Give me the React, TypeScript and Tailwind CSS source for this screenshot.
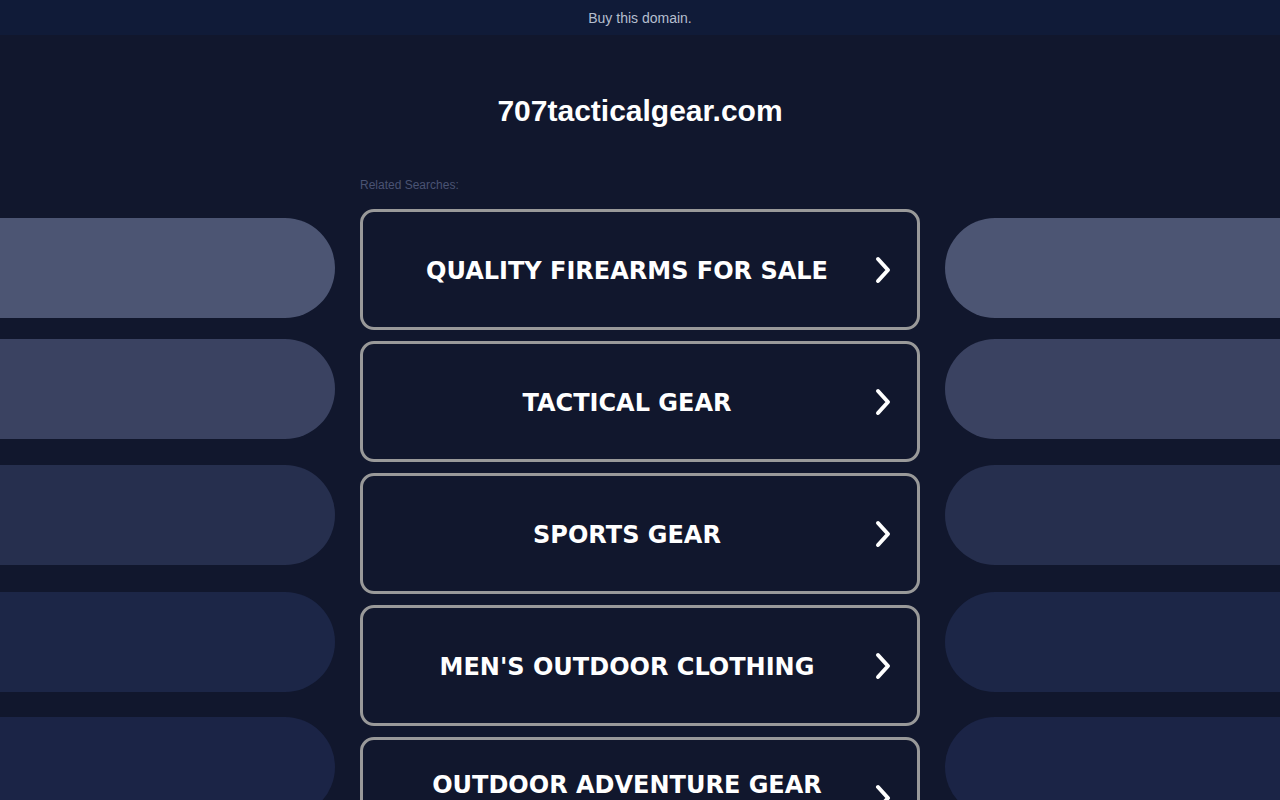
const LINKS = [
  "QUALITY FIREARMS FOR SALE",
  "TACTICAL GEAR",
  "SPORTS GEAR",
  "MEN'S OUTDOOR CLOTHING",
  "OUTDOOR ADVENTURE GEAR STORES",
]

const PILLS = [
  "bg-[#4c5573] mt-0",
  "bg-[#3a4261] mt-[21px]",
  "bg-[#262f4e] mt-[26px]",
  "bg-[#1c2647] mt-[27px]",
  "bg-[#1b2446] mt-[25px]",
]

function Chevron() {
  return (
    <svg width="20" height="28" viewBox="0 0 20 28" className="shrink-0">
      <polyline
        points="5,3 15,14 5,25"
        fill="none"
        stroke="#fff"
        strokeWidth="4"
        strokeLinecap="round"
        strokeLinejoin="round"
      />
    </svg>
  )
}

function Pills({ side }: { side: "left" | "right" }) {
  return (
    <div className="flex flex-col pt-[40px]">
      {PILLS.map((cls, i) => (
        <div
          key={i}
          className={`h-[100px] shrink-0 ${cls} ${side === "left" ? "rounded-r-[50px]" : "rounded-l-[50px]"}`}
        />
      ))}
    </div>
  )
}

export default function App() {
  return (
    <div className="h-[800px] overflow-hidden bg-[#11172d] font-['Liberation_Sans',Arial,sans-serif]">
      <div className="h-[35px] bg-[#101b38] flex items-center justify-center pt-[1px] text-[14px] text-[#b5bfcf]">
        Buy this domain.
      </div>

      <h1 className="pt-[59px] pb-[50px] text-center text-[30px] leading-[34px] font-bold text-white">
        707tacticalgear.com
      </h1>

      <div className="grid grid-cols-[335px_560px_335px] gap-x-[25px]">
        <Pills side="left" />

        <div className="flex flex-col">
          <p className="text-[12px] leading-[14px] text-[#4a5373] mb-[17px]">Related Searches:</p>
          {LINKS.map(label => (
            <a
              key={label}
              href="#"
              className="flex items-center h-[121px] shrink-0 border-[3px] border-[#999] rounded-[14px] pl-[30px] pr-[24px] mb-[11px]"
            >
              <span className="flex-1 text-center text-white font-bold text-[24px] leading-[29px] pt-[4px] pr-[12px] font-['DejaVu_Sans',Verdana,sans-serif]">
                {label}
              </span>
              <Chevron />
            </a>
          ))}
        </div>

        <Pills side="right" />
      </div>
    </div>
  )
}
